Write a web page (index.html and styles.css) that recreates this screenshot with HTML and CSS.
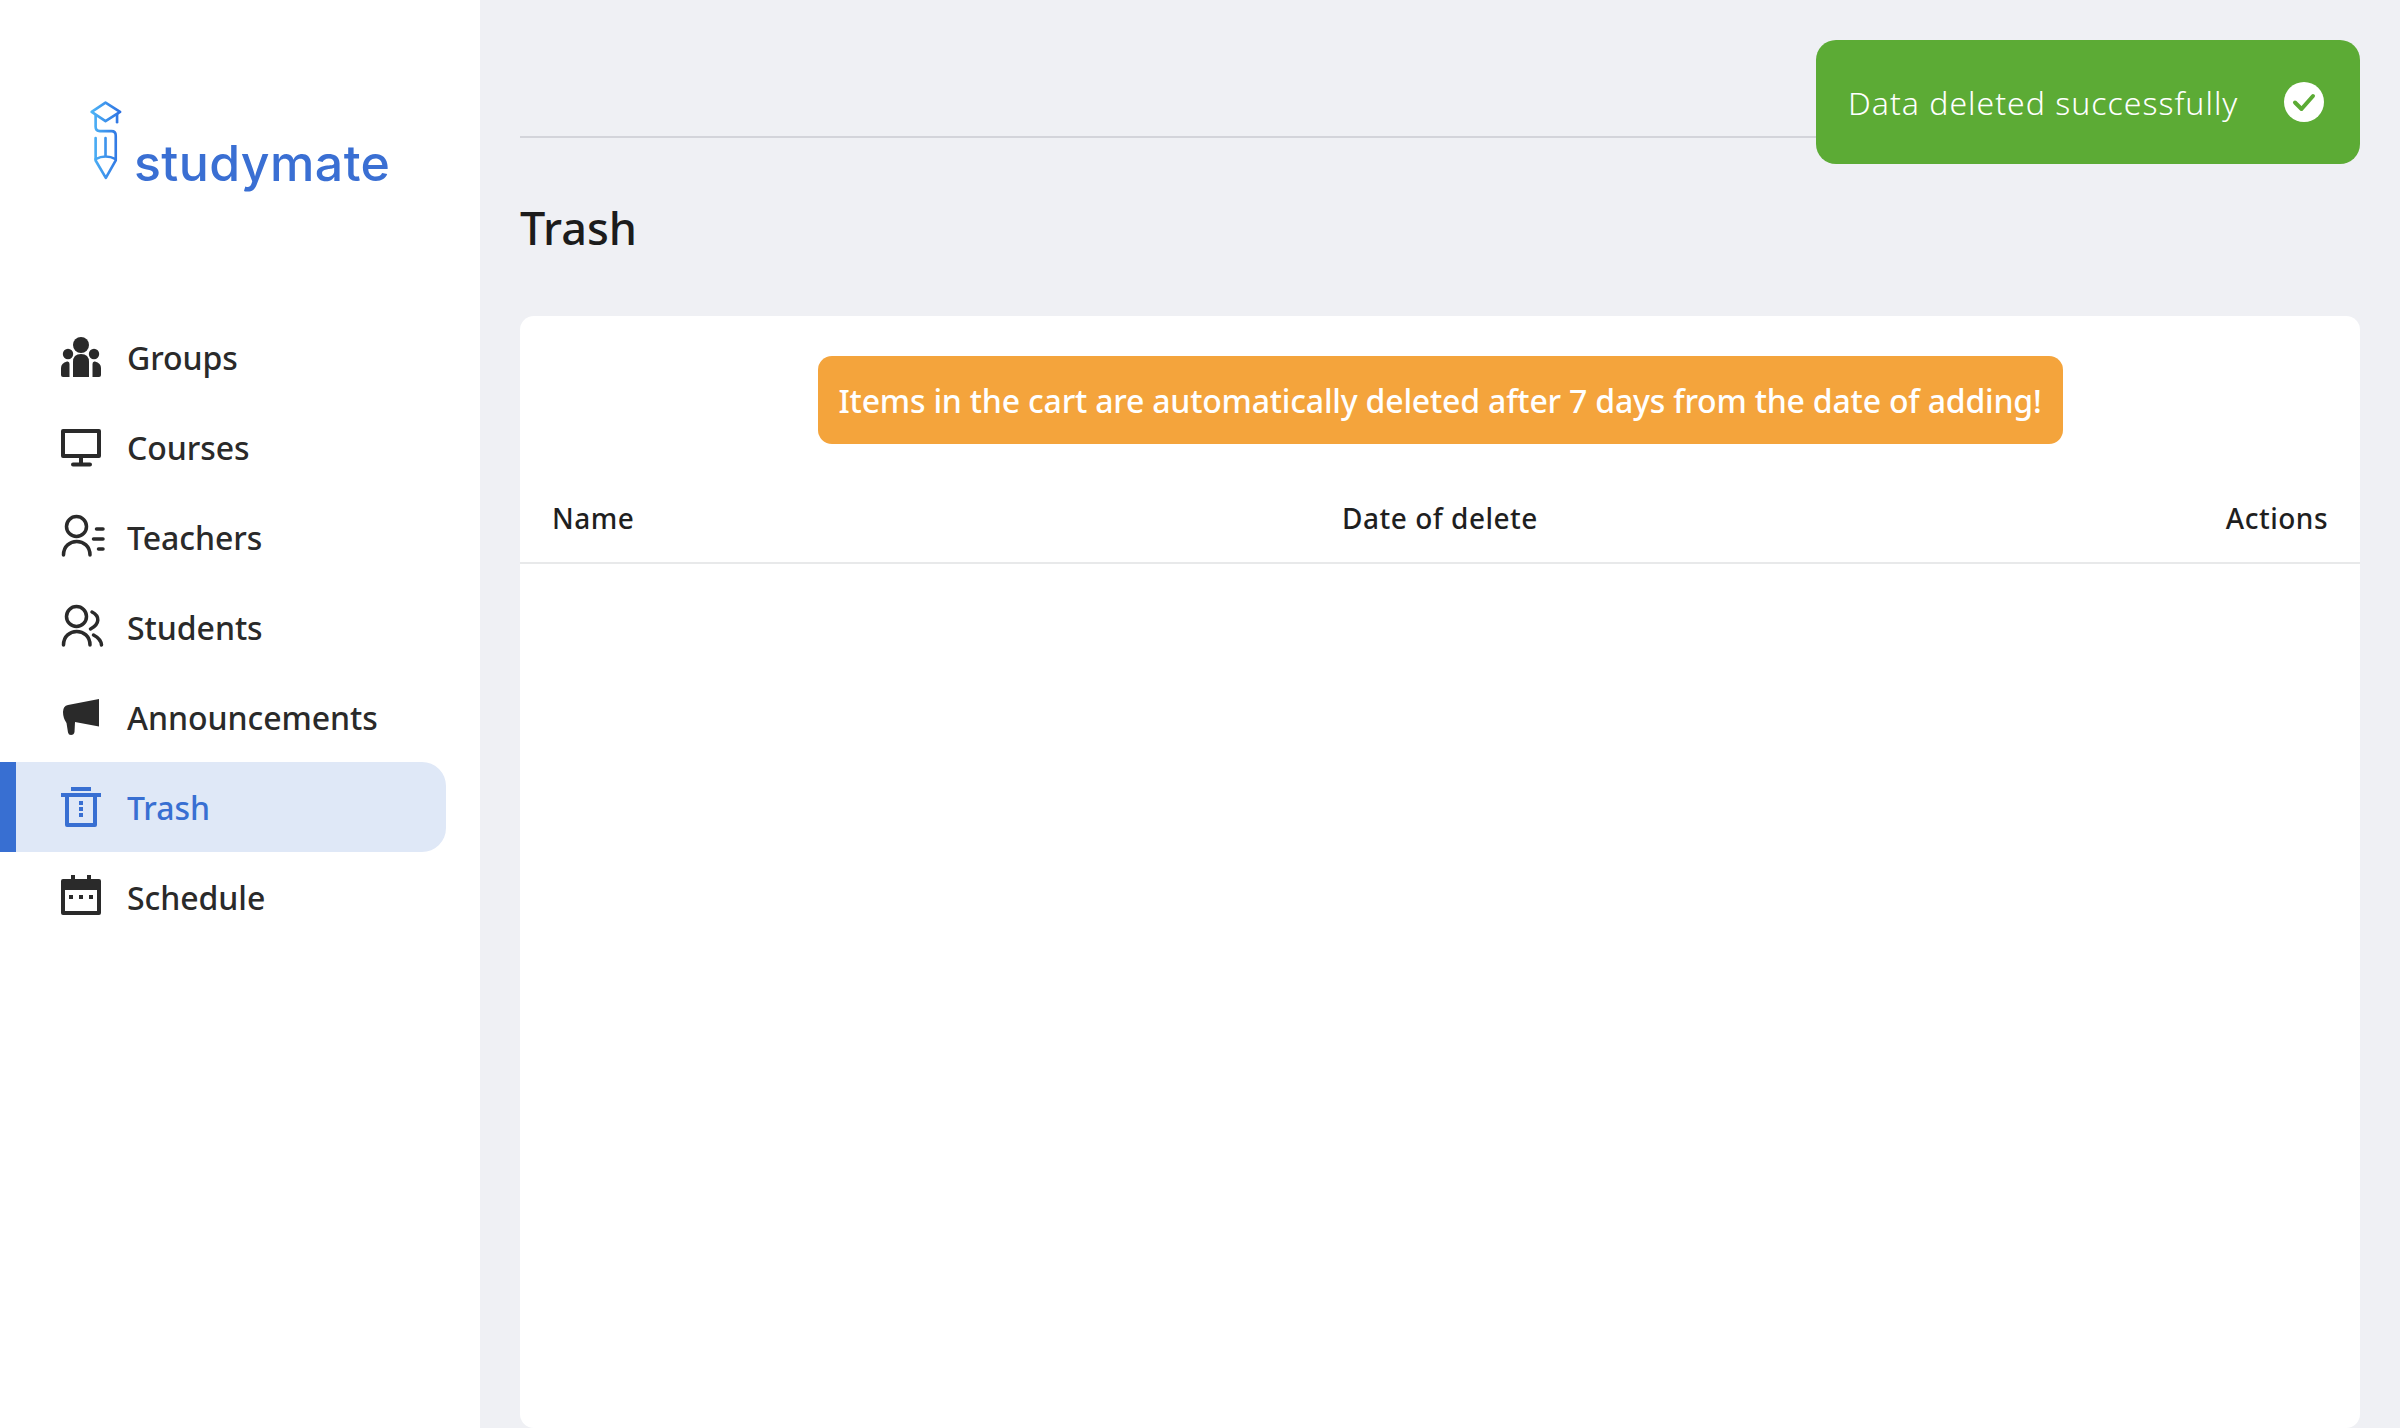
FILE: index.html
```html
<!DOCTYPE html>
<html lang="en">
<head>
    <meta charset="UTF-8">
    <title>Trash</title>
    <link rel="stylesheet" href="styles.css">
</head>
<body>
    <div class="layout">
        <aside class="sidebar">
            <div class="logo">
                <svg class="logo-icon" viewBox="150 90 100 240" fill="none" stroke="url(#logo-grad)" stroke-width="8" stroke-linecap="round" stroke-linejoin="round">
                    <defs>
                        <linearGradient id="logo-grad" gradientUnits="userSpaceOnUse" x1="150" y1="0" x2="250" y2="0">
                            <stop offset="0" stop-color="#4fb8f7"/>
                            <stop offset="1" stop-color="#2b6be0"/>
                        </linearGradient>
                    </defs>
                    <path d="M197 97 L241 125 L197 153 L155 125 Z"/>
                    <path d="M232 132 V156"/>
                    <path d="M167 136 V170 Q167 183 180 183 H215 Q228 183 228 196 V272 L198 325 L167 272 V204"/>
                    <path d="M197 204 V258 M167 268 Q197 252 228 268"/>
                </svg>
                <span class="logo-text">studymate</span>
            </div>
            <nav class="nav">
                <a class="nav-item">
                    <svg class="nav-icon" viewBox="0 0 42 42" fill="#2a2a2a">
                        <circle cx="21" cy="9" r="8"/>
                        <circle cx="8" cy="18" r="5.200"/>
                        <circle cx="34" cy="18" r="5.200"/>
                        <path d="M13 26 Q13 18 21 18 Q29 18 29 26 V41 H13 Z"/>
                        <path d="M1 32 Q1 27 7 25.500 Q9.500 25 9.500 28 V41 H3 Q1 41 1 39 Z"/>
                        <path d="M41 32 Q41 27 35 25.500 Q32.500 25 32.500 28 V41 H39 Q41 41 41 39 Z"/>
                    </svg>
                    Groups
                </a>
                <a class="nav-item">
                    <svg class="nav-icon" viewBox="0 0 42 42" fill="none" stroke="#2a2a2a" stroke-width="4" stroke-linecap="round" stroke-linejoin="round">
                        <rect x="3" y="5" width="36" height="25"/>
                        <path d="M21 30 V38 M13 38.500 H30"/>
                    </svg>
                    Courses
                </a>
                <a class="nav-item">
                    <svg class="nav-icon" viewBox="0 0 42 42" fill="none" stroke="#2a2a2a" stroke-width="3.500" stroke-linecap="round">
                        <circle cx="16.500" cy="10.500" r="10"/>
                        <path d="M3.500 39 C3.500 21 30 21 30 39"/>
                        <path d="M36.500 13 H43 M33.500 23 H43 M38.500 33 H43"/>
                    </svg>
                    Teachers
                </a>
                <a class="nav-item">
                    <svg class="nav-icon" viewBox="0 0 42 42" fill="none" stroke="#2a2a2a" stroke-width="3.500" stroke-linecap="round">
                        <circle cx="16.500" cy="10.500" r="10"/>
                        <path d="M3.500 39 C3.500 21 30 21 30 39"/>
                        <path d="M32 6 C40 10 40 18 30.500 23 M33.500 29 Q41 33 41.500 39"/>
                    </svg>
                    Students
                </a>
                <a class="nav-item">
                    <svg class="nav-icon" viewBox="0 0 42 42" fill="#2a2a2a">
                        <path d="M39 3 V30.500 L15 26 L14.500 36 Q14 39 11 39 Q8.500 39 8 36.500 L6.500 27 Q3 22 3 16 Q3 10 8 9 Z"/>
                    </svg>
                    Announcements
                </a>
                <a class="nav-item active">
                    <svg class="nav-icon" viewBox="0 0 42 42" fill="#386fd2">
                        <rect x="11" y="1" width="20" height="4"/>
                        <rect x="1" y="7" width="40" height="4"/>
                        <path d="M5 11 H9 V37 H33 V11 H37 V39 Q37 41 35 41 H7 Q5 41 5 39 Z"/>
                        <rect x="19" y="15" width="4" height="4"/>
                        <rect x="19" y="21" width="4" height="4"/>
                        <rect x="19" y="27" width="4" height="4"/>
                    </svg>
                    Trash
                </a>
                <a class="nav-item">
                    <svg class="nav-icon" viewBox="0 0 42 42">
                        <path fill="#2a2a2a" d="M11 -1 H15 V3 H27 V-1 H31 V3 H39 Q41 3 41 5 V37 Q41 39 39 39 H3 Q1 39 1 37 V5 Q1 3 3 3 H11 Z"/>
                        <rect x="5" y="14" width="32" height="21" fill="#fff"/>
                        <path fill="#2a2a2a" d="M9 19 H13 V23 H9 Z M19 19 H23 V23 H19 Z M29 19 H33 V23 H29 Z"/>
                    </svg>
                    Schedule
                </a>
            </nav>
        </aside>

        <main class="content">
            <div class="topbar"></div>
            <h1 class="page-title">Trash</h1>
            <section class="card">
                <div class="alert-row">
                    <div class="alert">Items in the cart are automatically deleted after 7 days from the date of adding!</div>
                </div>
                <div class="table-head">
                    <span>Name</span>
                    <span>Date of delete</span>
                    <span>Actions</span>
                </div>
            </section>
        </main>
    </div>

    <div class="toast">
        <span>Data deleted successfully</span>
        <svg class="toast-icon" viewBox="0 0 40 40">
            <circle cx="20" cy="20" r="20" fill="#fff"/>
            <path d="M11 20.500 L17.500 27 L29 14" fill="none" stroke="#5cab35" stroke-width="4" stroke-linecap="round" stroke-linejoin="round"/>
        </svg>
    </div>
</body>
</html>
```
FILE: styles.css
```css
* {
    box-sizing: border-box;
    margin: 0;
    padding: 0;
}

body {
    font-family: "Noto Sans", "Open Sans", sans-serif;
    background-color: #eff0f4;
    color: #1f1f1f;
    height: 100vh;
    overflow: hidden;
}

.layout {
    display: flex;
    height: 100%;
}

.sidebar {
    width: 480px;
    flex-shrink: 0;
    background-color: #fff;
}

.logo {
    display: flex;
    align-items: flex-end;
    height: 312px;
    padding: 101px 0 0 90px;
}

.logo-icon {
    width: 33px;
    height: 80px;
    margin-bottom: 132px;
}

.logo-text {
    margin: 0 0 119px 11px;
    font-family: Inter, sans-serif;
    font-size: 50px;
    font-weight: 500;
    line-height: 60px;
    letter-spacing: 0.4px;
    color: #3a6fd3;
}

.nav {
    display: flex;
    flex-direction: column;
}

.nav-item {
    display: flex;
    align-items: center;
    gap: 25px;
    height: 90px;
    width: 446px;
    padding-left: 60px;
    font-size: 32px;
    font-weight: 500;
    letter-spacing: -0.05px;
    color: #2a2a2a;
}

.nav-item.active {
    padding-left: 44px;
    border-left: 16px solid #386fd2;
    border-radius: 0 24px 24px 0;
    background-color: #dfe8f7;
    color: #386fd2;
}

.nav-icon {
    width: 42px;
    height: 42px;
    flex-shrink: 0;
    overflow: visible;
}

.content {
    flex: 1;
    display: flex;
    flex-direction: column;
    padding: 0 40px 0 40px;
    min-width: 0;
}

.topbar {
    height: 138px;
    flex-shrink: 0;
    border-bottom: 2px solid #d3d4da;
}

.page-title {
    margin-top: 60px;
    font-size: 45px;
    line-height: 60px;
    font-weight: 500;
    color: #1c1c1c;
}

.card {
    flex: 1;
    margin-top: 58px;
    background-color: #fff;
    border-radius: 14px;
}

.alert-row {
    display: flex;
    justify-content: center;
    padding-top: 40px;
}

.alert {
    width: 1245px;
    height: 88px;
    display: flex;
    align-items: center;
    justify-content: center;
    border-radius: 14px;
    background-color: #f4a43c;
    color: #fff;
    font-size: 32px;
    font-weight: 500;
    letter-spacing: -0.2px;
    white-space: nowrap;
}

.table-head {
    display: grid;
    grid-template-columns: 1fr 1fr 1fr;
    align-items: center;
    height: 120px;
    padding: 30px 32px 0;
    border-bottom: 2px solid #e8e9ea;
    font-size: 28px;
    font-weight: 500;
    letter-spacing: 0.5px;
    color: #1f1f1f;
}

.table-head span:nth-child(2) {
    text-align: center;
}

.table-head span:nth-child(3) {
    text-align: right;
}

/* sits over the header line */
.toast {
    position: absolute;
    top: 40px;
    right: 40px;
    width: 544px;
    height: 124px;
    display: flex;
    align-items: center;
    justify-content: space-between;
    padding: 0 36px 0 32px;
    border-radius: 20px;
    background-color: #5cab35;
    color: #fff;
    font-size: 32px;
    font-weight: 300;
    letter-spacing: 1px;
}

.toast-icon {
    width: 40px;
    height: 40px;
}
```
